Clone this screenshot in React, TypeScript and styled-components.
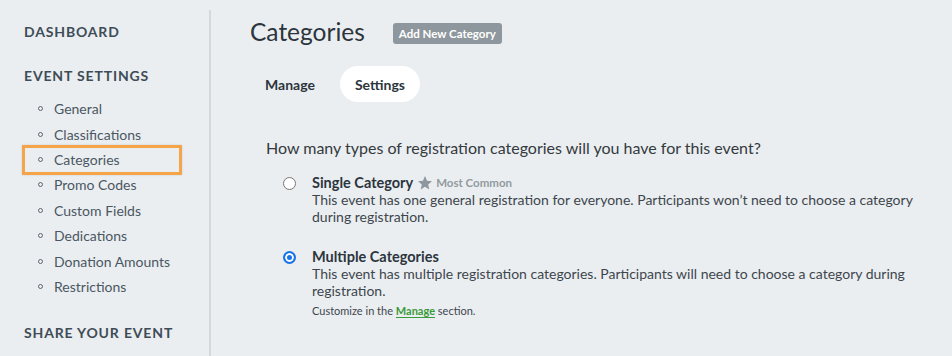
import styled, { createGlobalStyle } from "styled-components";

const GlobalStyle = createGlobalStyle`
    html, body {
        margin: 0;
        padding: 0;
        background: #ebeef0;
    }
    body {
        font-family: "Lato", "Liberation Sans", sans-serif;
        color: #333a40;
    }
`;

const Page = styled.div`
    display: flex;
    width: 952px;
    height: 356px;
    overflow: hidden;
    background: #ebeef0;
`;

const Sidebar = styled.aside`
    width: 211px;
    flex-shrink: 0;
    margin-top: 10px;
    padding: 14px 0 0 24px;
    box-sizing: border-box;
    border-right: 2px solid #d3d8dc;
`;

const SideHeading = styled.div<{ $gap?: number }>`
    font-size: 14px;
    font-weight: 700;
    letter-spacing: 0.06em;
    text-transform: uppercase;
    color: #3e4c57;
    line-height: 16px;
    margin-bottom: ${p => p.$gap ?? 0}px;
`;

const NavList = styled.ul`
    list-style: none;
    margin: 0 0 26px;
    padding: 0;
`;

const NavItem = styled.li<{ $active?: boolean }>`
    display: flex;
    align-items: center;
    gap: 11px;
    height: 25.4px;
    width: 160px;
    box-sizing: border-box;
    padding-left: 14px;
    font-size: 14px;
    color: #4a5763;
    ${p =>
        p.$active &&
        `
        height: 30px;
        margin: -2px 0 -2.6px -2px;
        padding-left: 13px;
        border: 3px solid #f5a447;
        box-shadow: 0 0 2px rgba(0, 0, 0, 0.12);
    `}
`;

const Bullet = styled.span`
    width: 3px;
    height: 3px;
    border: 1.5px solid #5a6670;
    border-radius: 50%;
    flex-shrink: 0;
`;

const Main = styled.main`
    flex: 1;
    padding: 17px 0 0 39px;
`;

const TitleRow = styled.div`
    display: flex;
    align-items: center;
    gap: 28px;
`;

const Title = styled.h1`
    margin: 0;
    font-size: 24.5px;
    font-weight: 400;
    color: #2c353d;
`;

const AddButton = styled.button`
    font-family: inherit;
    font-size: 11.5px;
    font-weight: 700;
    color: #fff;
    background: #8e979d;
    border: none;
    border-radius: 3px;
    height: 21px;
    padding: 0 6px;
    margin-top: 4px;
`;

const Tabs = styled.div`
    display: flex;
    align-items: center;
    margin-top: 20px;
`;

const Tab = styled.div<{ $active?: boolean }>`
    height: 36px;
    display: flex;
    align-items: center;
    padding: 0 15px;
    border-radius: 18px;
    font-size: 14px;
    font-weight: 700;
    color: #2c353d;
    background: ${p => (p.$active ? "#fff" : "transparent")};
    margin-right: 10px;
`;

const Question = styled.p`
    margin: 36px 0 0 16px;
    font-size: 16px;
    color: #333a40;
`;

const Options = styled.div`
    margin: 17px 0 0 33px;
    display: flex;
    flex-direction: column;
    gap: 23px;
`;

const Option = styled.label`
    display: flex;
    gap: 16px;
    align-items: flex-start;
`;

const Radio = styled.span<{ $checked?: boolean }>`
    width: 13px;
    height: 13px;
    border-radius: 50%;
    box-sizing: border-box;
    flex-shrink: 0;
    margin-top: 3px;
    background: ${p => (p.$checked ? "#1a73e8" : "#fff")};
    border: ${p => (p.$checked ? "2px solid #1a73e8" : "1px solid #767676")};
    box-shadow: ${p => (p.$checked ? "inset 0 0 0 2px #fff" : "none")};
`;

const OptionBody = styled.div`
    width: 620px;
`;

const OptionTitle = styled.div`
    display: flex;
    align-items: center;
    font-size: 14.5px;
    font-weight: 700;
    color: #2c353d;
    line-height: 18px;
`;

const Badge = styled.span`
    display: inline-flex;
    align-items: center;
    gap: 3px;
    margin-left: 4px;
    font-size: 11.5px;
    font-weight: 700;
    color: #929aa0;
`;

const Desc = styled.div`
    font-size: 14px;
    line-height: 16.5px;
    color: #3d464e;
`;

const Note = styled.div`
    margin-top: 5px;
    font-size: 11px;
    color: #3d464e;
`;

const Link = styled.a`
    color: #3a9a3a;
    font-weight: 700;
    text-decoration: none;
    border-bottom: 1px solid #3a9a3a;
`;

const Star = () => (
    <svg width="16" height="16" viewBox="0 0 24 24" fill="#8e979d">
        <path d="M12 1.5l3 7.1 7.5.6-5.7 5 1.7 7.4L12 17.6l-6.5 4 1.7-7.4-5.7-5 7.5-.6z" />
    </svg>
);

const items = [
    "General",
    "Classifications",
    "Categories",
    "Promo Codes",
    "Custom Fields",
    "Dedications",
    "Donation Amounts",
    "Restrictions",
];

export default function App() {
    return (
        <Page>
            <GlobalStyle />
            <Sidebar>
                <SideHeading $gap={28}>Dashboard</SideHeading>
                <SideHeading $gap={12}>Event Settings</SideHeading>
                <NavList>
                    {items.map(item => (
                        <NavItem key={item} $active={item === "Categories"}>
                            <Bullet />
                            {item}
                        </NavItem>
                    ))}
                </NavList>
                <SideHeading>Share Your Event</SideHeading>
            </Sidebar>
            <Main>
                <TitleRow>
                    <Title>Categories</Title>
                    <AddButton>Add New Category</AddButton>
                </TitleRow>
                <Tabs>
                    <Tab>Manage</Tab>
                    <Tab $active>Settings</Tab>
                </Tabs>
                <Question>How many types of registration categories will you have for this event?</Question>
                <Options>
                    <Option>
                        <Radio />
                        <OptionBody>
                            <OptionTitle>
                                Single Category
                                <Badge>
                                    <Star />
                                    Most Common
                                </Badge>
                            </OptionTitle>
                            <Desc>
                                This event has one general registration for everyone. Participants won’t need to choose a category during registration.
                            </Desc>
                        </OptionBody>
                    </Option>
                    <Option>
                        <Radio $checked />
                        <OptionBody>
                            <OptionTitle>Multiple Categories</OptionTitle>
                            <Desc>
                                This event has multiple registration categories. Participants will need to choose a category during registration.
                            </Desc>
                            <Note>
                                Customize in the <Link>Manage</Link> section.
                            </Note>
                        </OptionBody>
                    </Option>
                </Options>
            </Main>
        </Page>
    );
}
